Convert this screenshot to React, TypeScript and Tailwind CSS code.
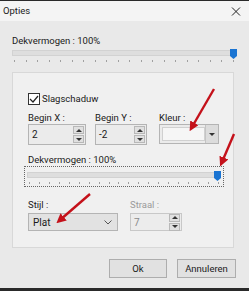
import React from 'react';

function Slider({ thumbLeft }: { thumbLeft: number }) {
    const ticks = Array.from({ length: 20 });
    return (
        <div className="relative h-[16px]">
            <div className="absolute left-0 right-0 top-[2px] h-[6px] bg-[#dedede] border border-[#d2d2d2]" />
            <svg className="absolute top-[1px]" style={{ left: thumbLeft }} width="7" height="10" viewBox="0 0 7 10">
                <path d="M0 0 H7 V7 L3.5 10 L0 7 Z" fill="#1a74d2" />
            </svg>
            <div className="absolute left-[2px] right-[2px] top-[12px] flex justify-between">
                {ticks.map((_, i) => (
                    <div key={i} className="w-px h-[2px] bg-[#a0a0a0]" />
                ))}
            </div>
        </div>
    );
}

function Spin() {
    return (
        <div className="flex flex-col gap-px w-[11px] mr-[1px]">
            <div className="h-[8px] bg-[#e0e0e0] border border-[#b8b8b8] flex items-center justify-center">
                <div className="w-0 h-0 border-l-[3px] border-r-[3px] border-b-[3px] border-l-transparent border-r-transparent border-b-[#333]" />
            </div>
            <div className="h-[8px] bg-[#e0e0e0] border border-[#b8b8b8] flex items-center justify-center">
                <div className="w-0 h-0 border-l-[3px] border-r-[3px] border-t-[3px] border-l-transparent border-r-transparent border-t-[#333]" />
            </div>
        </div>
    );
}

function NumField({ label, value, width }: { label: string; value: string; width: string }) {
    return (
        <div className={"flex flex-col shrink-0 " + width}>
            <span className="leading-[13px]">{label}</span>
            <div className="h-[21px] border border-[#b4b4b4] bg-[#ebebeb] flex items-center justify-between pl-[3px]">
                <span className="text-[10px]">{value}</span>
                <Spin />
            </div>
        </div>
    );
}

export default function App() {
    return (
        <div className="relative w-[249px] h-[291px] overflow-hidden bg-[#e9e9e9] text-[9.5px] text-[#1a1a1a] border-t border-[#2a2a2a] flex flex-col" style={{ fontFamily: 'Roboto, "Noto Sans", sans-serif' }}>
            <div className="h-[20px] bg-[#f4f4f4] flex items-center justify-between pl-[3px] pr-[8px]">
                <span className="leading-[12px]">Opties</span>
                <svg width="10" height="9" viewBox="0 0 10 9">
                    <path d="M1 0.5 L9 8.5 M9 0.5 L1 8.5" stroke="#222" strokeWidth="1" />
                </svg>
            </div>

            <div className="flex-1 flex flex-col px-[12px] pt-[14px]">
                <span className="leading-[12px]">Dekvermogen : 100%</span>
                <div className="mt-[1px] pr-[1px]">
                    <Slider thumbLeft={218} />
                </div>

                <div className="mt-[8px] h-[176px] w-[222px] border border-[#d8d8d8] bg-[#f0f0f0] flex flex-col pl-[15px] pt-[20px]">
                    <label className="flex items-center gap-[2px] h-[12px]">
                        <div className="w-[12px] h-[12px] border border-[#333] bg-white flex items-center justify-center">
                            <svg width="10" height="8" viewBox="0 0 10 8">
                                <path d="M1 4 L4 7 L9 1" stroke="#222" strokeWidth="1.2" fill="none" />
                            </svg>
                        </div>
                        <span className="leading-[12px]">Slagschaduw</span>
                    </label>

                    <div className="flex mt-[6px]">
                        <NumField label="Begin X :" value="2" width="w-[58px]" />
                        <div className="w-[9px] shrink-0" />
                        <NumField label="Begin Y :" value="-2" width="w-[52px]" />
                        <div className="w-[12px] shrink-0" />
                        <div className="flex flex-col w-[60px] shrink-0">
                            <span className="leading-[13px]">Kleur :</span>
                            <div className="h-[20px] border border-[#b4b4b4] bg-[#ebebeb] flex">
                                <div className="flex-1 m-[2px] mr-0 bg-[#f6f6f6] border border-[#d0d0d0]" />
                                <div className="w-[13px] bg-[#dcdcdc] border-l border-[#c4c4c4] flex items-center justify-center">
                                    <div className="w-0 h-0 border-l-[3px] border-r-[3px] border-t-[3px] border-l-transparent border-r-transparent border-t-[#333]" />
                                </div>
                            </div>
                        </div>
                    </div>

                    <span className="mt-[9px] leading-[12px]">Dekvermogen : 100%</span>
                    <div className="-ml-[4px] w-[200px] h-[21px] border border-dotted border-[#666] pt-[3px] px-[2px]">
                        <Slider thumbLeft={187} />
                    </div>

                    <div className="flex mt-[12px] gap-[12px]">
                        <div className="flex flex-col w-[90px]">
                            <span className="leading-[12px]">Stijl :</span>
                            <div className="mt-[2px] h-[18px] border border-[#b4b4b4] bg-[#e2e2e2] flex items-center justify-between pl-[4px] pr-[5px]">
                                <span className="text-[10px]">Plat</span>
                                <svg width="8" height="5" viewBox="0 0 8 5">
                                    <path d="M0.5 0.5 L4 4 L7.5 0.5" stroke="#555" fill="none" />
                                </svg>
                            </div>
                        </div>
                        <div className="flex flex-col w-[52px]">
                            <span className="leading-[12px] text-[#9a9a9a]">Straal :</span>
                            <div className="mt-[2px] h-[18px] border border-[#c8c8c8] bg-[#ececec] flex items-center justify-between pl-[3px]">
                                <span className="text-[10px] text-[#8a8a8a]">7</span>
                                <Spin />
                            </div>
                        </div>
                    </div>
                </div>

                <div className="mt-[11px] flex justify-end gap-[10px] pr-[1px]">
                    <button className="w-[58px] h-[19px] border border-[#adadad] bg-[#e1e1e1] leading-[12px]">Ok</button>
                    <button className="w-[59px] h-[19px] border border-[#adadad] bg-[#e1e1e1] leading-[12px]">Annuleren</button>
                </div>
            </div>
            <div className="h-[3px] bg-[#2a2a2a]" />

            <svg className="absolute inset-0 pointer-events-none" width="249" height="291" viewBox="0 0 249 291">
                <defs>
                    <marker id="ah" markerWidth="4" markerHeight="4" refX="2" refY="2" orient="auto" markerUnits="strokeWidth">
                        <path d="M0 0 L4 2 L0 4 Z" fill="#c4111a" />
                    </marker>
                </defs>
                <path d="M214 88 L192 126" stroke="#c4111a" strokeWidth="2.4" markerEnd="url(#ah)" />
                <path d="M234 133 L222 161" stroke="#c4111a" strokeWidth="2.4" markerEnd="url(#ah)" />
                <path d="M90 193 L60 219" stroke="#c4111a" strokeWidth="2.4" markerEnd="url(#ah)" />
            </svg>
        </div>
    );
}
